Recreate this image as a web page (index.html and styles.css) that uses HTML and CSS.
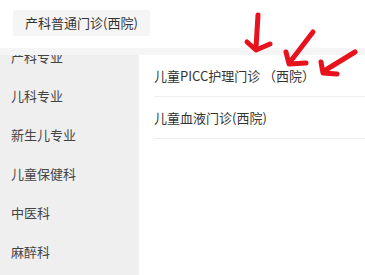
FILE: index.html
```html
<!DOCTYPE html>
<html lang="zh">
<head>
<meta charset="utf-8">
<link rel="stylesheet" href="styles.css">
</head>
<body>
<div class="page">
  <div class="header">
    <span class="chip">产科普通门诊(西院)</span>
  </div>
  <div class="band"></div>
  <div class="main">
    <div class="sidebar">
      <ul class="menu">
        <li class="menu-item">产科专业</li>
        <li class="menu-item">儿科专业</li>
        <li class="menu-item">新生儿专业</li>
        <li class="menu-item">儿童保健科</li>
        <li class="menu-item">中医科</li>
        <li class="menu-item">麻醉科</li>
      </ul>
    </div>
    <div class="content">
      <ul class="clinics">
        <li class="clinic">儿童PICC护理门诊 （西院）</li>
        <li class="clinic">儿童血液门诊(西院)</li>
      </ul>
    </div>
  </div>
  <svg class="arrows" width="365" height="275" viewBox="0 0 365 275">
    <g fill="none" stroke="#e8121c" stroke-width="5" stroke-linecap="round" stroke-linejoin="round">
      <path d="M258 15 L256 48"/>
      <path d="M247 42 L256 50 L270 44"/>
      <path d="M313 32 L290 62"/>
      <path d="M286 52 L289 64 L306 63"/>
      <path d="M355 52 L324 71"/>
      <path d="M321 62 L323 73 L337 74"/>
    </g>
  </svg>
</div>
</body>
</html>
```

FILE: styles.css
```css
html, body {
  margin: 0;
  padding: 0;
  background: #ffffff;
}
body {
  font-family: "Noto Sans CJK SC", "Noto Sans", sans-serif;
  font-size: 13px;
  color: #333333;
}
.page {
  position: relative;
  width: 365px;
  height: 275px;
  overflow: hidden;
  display: flex;
  flex-direction: column;
}
.header {
  height: 48px;
  box-sizing: border-box;
  padding: 10px 13px 0;
}
.chip {
  display: inline-block;
  height: 26px;
  line-height: 26px;
  padding: 0 12px;
  background: #f5f5f5;
  border-radius: 3px;
  color: #333333;
}
.band {
  height: 7px;
  background: #f5f5f5;
}
.main {
  flex: 1;
  display: flex;
  min-height: 0;
}
.sidebar {
  width: 139px;
  background: #efefef;
  overflow: hidden;
}
.menu {
  list-style: none;
  margin: -18px 0 0;
  padding: 0;
}
.menu-item {
  height: 39px;
  line-height: 39px;
  padding-left: 11px;
  color: #444444;
}
.content {
  flex: 1;
  padding-left: 15px;
  background: #ffffff;
}
.clinics {
  list-style: none;
  margin: 0;
  padding: 0;
}
.clinic {
  height: 42px;
  line-height: 41px;
  box-sizing: border-box;
  border-bottom: 1px solid #eeeeee;
  color: #333333;
}
.arrows {
  position: absolute;
  left: 0;
  top: 0;
  pointer-events: none;
}
```
